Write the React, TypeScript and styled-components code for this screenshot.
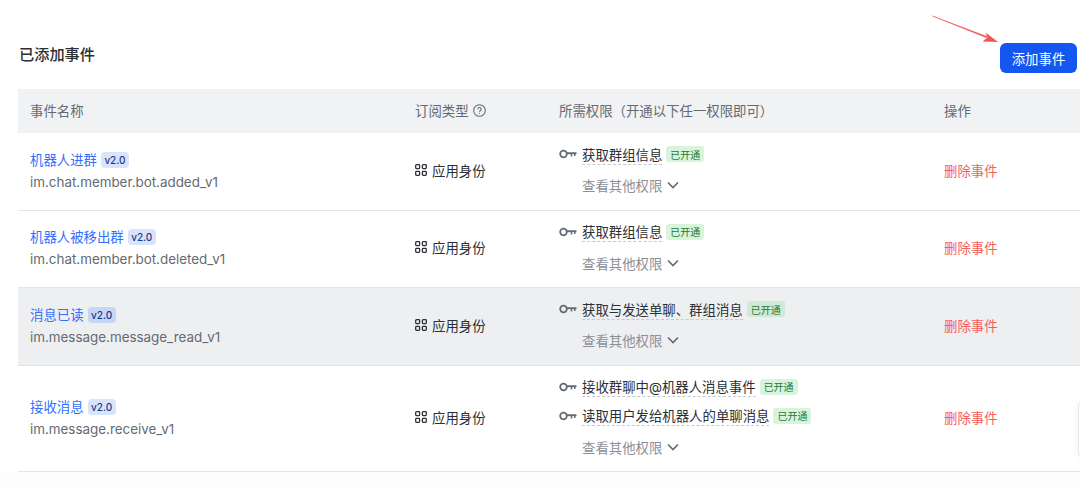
import { createGlobalStyle, styled } from "styled-components";

const GlobalStyle = createGlobalStyle`
  html, body {
    margin: 0;
    padding: 0;
    background: #fff;
    font-family: Inter, "Noto Sans CJK SC", sans-serif;
    color: #1f2329;
  }
`;

const Page = styled.div`
  position: relative;
  width: 1080px;
  height: 488px;
  overflow: hidden;
  background: #fdfdfd;
`;

const Top = styled.div`
  background: #fff;
`;

const Toolbar = styled.div`
  display: flex;
  align-items: center;
  justify-content: space-between;
  height: 89px;
  box-sizing: border-box;
  padding: 21px 3px 0 19px;
`;

const Title = styled.h2`
  margin: 0;
  font-size: 15.2px;
  font-weight: 500;
  line-height: 24px;
  color: #2b2f36;
`;

const AddButton = styled.button`
  width: 77px;
  height: 30px;
  margin-top: 6px;
  padding: 0;
  border: none;
  border-radius: 6px;
  background: #1456f0;
  color: #fff;
  font: inherit;
  font-size: 13.4px;
`;

const Arrow = styled.svg`
  position: absolute;
  left: 930px;
  top: 14px;
`;

const Table = styled.div`
  margin-left: 18px;
  font-size: 13.4px;
`;

const grid = "385px 144px 385px 148px";

const HeadRow = styled.div`
  display: grid;
  grid-template-columns: ${grid};
  align-items: center;
  height: 44px;
  padding-bottom: 2px;
  box-sizing: border-box;
  background: #f1f2f4;
  color: #646a73;
`;

const Row = styled.div<{ $height: number; $hover?: boolean }>`
  display: grid;
  grid-template-columns: ${grid};
  align-items: center;
  box-sizing: border-box;
  height: ${(p) => p.$height}px;
  padding-bottom: 2px;
  border-bottom: 1px solid ${(p) => (p.$hover ? "#dee0e3" : "#e4e5e7")};
  background: ${(p) => (p.$hover ? "#eeeff1" : "#fff")};
`;

const Cell = styled.div`
  padding-left: 12px;
  min-width: 0;
`;

const TypeHead = styled(Cell)`
  display: flex;
  align-items: center;
  gap: 4px;
`;

const NameLine = styled.div`
  display: flex;
  align-items: center;
  gap: 4px;
  height: 20px;
`;

const EventLink = styled.a`
  color: #3370ff;
  line-height: 20px;
`;

const Version = styled.span<{ $hover?: boolean }>`
  display: inline-flex;
  align-items: center;
  justify-content: center;
  width: 28px;
  height: 16px;
  border-radius: 4px;
  background: ${(p) => (p.$hover ? "#c7d6f6" : "#d9e3fb")};
  color: #173a87;
  font-size: 10px;
  font-weight: 500;
`;

const EventKey = styled.div`
  margin-top: 2px;
  color: #646a73;
  line-height: 20px;
`;

const Identity = styled(Cell)`
  display: flex;
  align-items: center;
  gap: 5px;
  padding-bottom: 2px;
  color: #2b2f36;
`;

const PermList = styled(Cell)`
  display: flex;
  flex-direction: column;
  padding-bottom: 5px;
`;

const PermLine = styled.div`
  display: flex;
  align-items: center;
  height: 29px;
`;

const KeyWrap = styled.span`
  display: flex;
  width: 23px;
  flex: none;
  margin-top: -3px;
`;

const PermName = styled.span`
  color: #2b2f36;
  line-height: 17px;
  border-bottom: 1px dashed #c5c8cd;
`;

const Granted = styled.span<{ $hover?: boolean }>`
  display: inline-flex;
  align-items: center;
  justify-content: center;
  width: 38px;
  height: 16px;
  margin-left: 4px;
  margin-top: -3px;
  border-radius: 3px;
  background: ${(p) => (p.$hover ? "#d1e8d5" : "#d9f3dd")};
  color: #237b36;
  font-size: 10px;
`;

const More = styled.div`
  display: flex;
  align-items: center;
  gap: 5px;
  height: 20px;
  margin-top: 5px;
  padding-left: 23px;
  color: #8a8f97;
`;

const DeleteLink = styled(Cell)`
  padding-bottom: 2px;
  color: #f5605b;
`;

const SideCard = styled.div`
  position: absolute;
  left: 1078px;
  top: 400px;
  width: 20px;
  height: 58px;
  box-sizing: border-box;
  border: 1px solid #e8e9eb;
  border-radius: 6px;
  background: #fff;
  box-shadow: 0 0 8px rgba(31, 35, 41, 0.05);
`;

const KeyIcon = () => (
  <svg width="18" height="10" viewBox="0 0 18 10" fill="none" stroke="#646a73">
    <circle cx="4.500" cy="5" r="3.300" strokeWidth="1.800" />
    <path d="M8 4.200h9.500" strokeWidth="1.900" />
    <path d="M12.500 4.500v3M15.800 4.500v2.500" strokeWidth="1.500" />
  </svg>
);

const GridIcon = () => (
  <svg width="12" height="12" viewBox="0 0 12 12" fill="none" stroke="#2b2f36" strokeWidth="1.300">
    <rect x="0.700" y="0.700" width="3.900" height="3.900" rx="0.800" />
    <rect x="7.400" y="0.700" width="3.900" height="3.900" rx="0.800" />
    <rect x="0.700" y="7.400" width="3.900" height="3.900" rx="0.800" />
    <rect x="7.400" y="7.400" width="3.900" height="3.900" rx="0.800" />
  </svg>
);

const Chevron = () => (
  <svg width="12" height="8" viewBox="0 0 12 8" fill="none" stroke="#646a73" strokeWidth="1.600">
    <path d="M1 1.500l5 5 5-5" />
  </svg>
);

const HelpIcon = () => (
  <svg width="13" height="13" viewBox="0 0 13 13" fill="none" stroke="#646a73" strokeWidth="1.100">
    <circle cx="6.500" cy="6.500" r="5.800" />
    <path d="M4.800 5.200c0-2.200 3.400-2.200 3.400 0 0 1.300-1.700 1.200-1.700 2.500" />
    <path d="M6.500 8.800v1" />
  </svg>
);

interface EventItem {
  name: string;
  eventKey: string;
  perms: string[];
  height: number;
  hover?: boolean;
}

const events: EventItem[] = [
  { name: "机器人进群", eventKey: "im.chat.member.bot.added_v1", perms: ["获取群组信息"], height: 78 },
  { name: "机器人被移出群", eventKey: "im.chat.member.bot.deleted_v1", perms: ["获取群组信息"], height: 77 },
  { name: "消息已读", eventKey: "im.message.message_read_v1", perms: ["获取与发送单聊、群组消息"], height: 78, hover: true },
  { name: "接收消息", eventKey: "im.message.receive_v1", perms: ["接收群聊中@机器人消息事件", "读取用户发给机器人的单聊消息"], height: 106 },
];

export default function App() {
  return (
    <Page>
      <GlobalStyle />
      <Top>
        <Toolbar>
          <Title>已添加事件</Title>
          <AddButton type="button">添加事件</AddButton>
        </Toolbar>
        <Table>
          <HeadRow>
            <Cell>事件名称</Cell>
            <TypeHead>
              订阅类型
              <HelpIcon />
            </TypeHead>
            <Cell>所需权限（开通以下任一权限即可）</Cell>
            <Cell>操作</Cell>
          </HeadRow>
          {events.map((item) => (
            <Row key={item.eventKey} $height={item.height} $hover={item.hover}>
              <Cell>
                <NameLine>
                  <EventLink>{item.name}</EventLink>
                  <Version $hover={item.hover}>v2.0</Version>
                </NameLine>
                <EventKey>{item.eventKey}</EventKey>
              </Cell>
              <Identity>
                <GridIcon />
                应用身份
              </Identity>
              <PermList>
                {item.perms.map((perm) => (
                  <PermLine key={perm}>
                    <KeyWrap>
                      <KeyIcon />
                    </KeyWrap>
                    <PermName>{perm}</PermName>
                    <Granted $hover={item.hover}>已开通</Granted>
                  </PermLine>
                ))}
                <More>
                  查看其他权限
                  <Chevron />
                </More>
              </PermList>
              <DeleteLink>删除事件</DeleteLink>
            </Row>
          ))}
        </Table>
      </Top>
      <Arrow width="72" height="32" viewBox="0 0 72 32" fill="none">
        <path d="M2.500 2L57 22.500L56.500 23.800Z" fill="#f25555" stroke="#f25555" strokeWidth="0.500" />
        <path d="M68 28L52.500 27.500L57.500 23.500L55.500 18.500Z" fill="#f25555" />
      </Arrow>
      <SideCard />
    </Page>
  );
}
